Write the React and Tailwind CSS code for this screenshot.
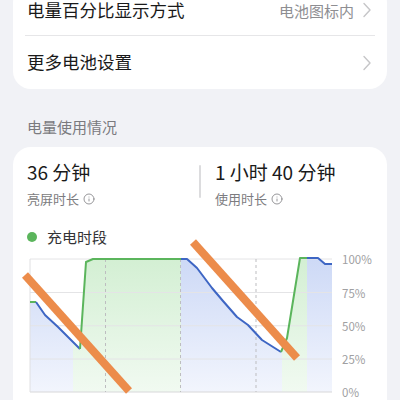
import React from 'react';
import { Info } from 'lucide-react';

const FONT = { fontFamily: '"Noto Sans CJK SC", "Noto Sans", sans-serif' };

/* chart geometry in page coordinates */
const TOP = 259;
const BOTTOM = 392;
const LEFT = 30;
const RIGHT = 332;

const blueA = [[36, 302], [45, 315], [58, 327], [68, 337], [80, 349]];
const greenA = [[80, 349], [86, 262], [93, 259], [181, 259]];
const blueB = [[181, 259], [187, 259], [197, 268], [212, 288], [223, 301], [237, 317], [248, 325], [262, 340], [281, 352]];
const greenB = [[281, 352], [287, 338], [300, 258], [307, 258]];
const blueC = [[307, 258], [318, 258], [325, 264], [332, 264]];

const curve = [[30, 302], ...blueA, ...greenA.slice(1), ...blueB.slice(1), ...greenB.slice(1), ...blueC.slice(1)];

const pts = arr => arr.map(p => p.join(',')).join(' ');

function Chevron(){
return (
<svg width="8" height="16" viewBox="0 0 8 16" className="shrink-0">
<polyline points="1,1.5 7,8 1,14.5" fill="none" stroke="#c6c6c8" strokeWidth="1.4" strokeLinecap="round" strokeLinejoin="round"/>
</svg>
);
}

function Chart(){

const area = `M30,${BOTTOM} L${pts(curve).replace(/ /g,' L')} L332,${BOTTOM} Z`;

return (
<svg width="373" height="152" viewBox="13 248 373 152" className="block overflow-visible">
<defs>
<linearGradient id="gBlue" x1="0" y1="0" x2="0" y2="1">
<stop offset="0" stopColor="#cdd9f6"/>
<stop offset="1" stopColor="#f2f5fd"/>
</linearGradient>
<linearGradient id="gGreen" x1="0" y1="0" x2="0" y2="1">
<stop offset="0" stopColor="#d3efd3"/>
<stop offset="1" stopColor="#f1faf1"/>
</linearGradient>
<clipPath id="cBlue">
<rect x="30" y="240" width="43" height="160"/>
<rect x="181" y="240" width="101" height="160"/>
<rect x="307" y="240" width="25" height="160"/>
</clipPath>
<clipPath id="cGreen">
<rect x="73" y="240" width="108" height="160"/>
<rect x="282" y="240" width="25" height="160"/>
</clipPath>
</defs>

{/* fills */}
<path d={area} fill="url(#gBlue)" clipPath="url(#cBlue)"/>
<path d={area} fill="url(#gGreen)" clipPath="url(#cGreen)"/>

{/* grid */}
{[259, 292.5, 325.75, 359].map(y=>(
<line key={y} x1={LEFT} x2={RIGHT} y1={y} y2={y} stroke="#e4e4e6" strokeWidth="1"/>
))}
<line x1={LEFT} x2={RIGHT} y1={BOTTOM} y2={BOTTOM} stroke="#d8d8da" strokeWidth="1.2"/>
<line x1={LEFT} x2={LEFT} y1={TOP} y2={BOTTOM} stroke="#e0e0e2" strokeWidth="1"/>
{[105.5, 180.5, 256].map(x=>(
<line key={x} x1={x} x2={x} y1={TOP} y2={BOTTOM} stroke="#bdbdc0" strokeWidth="1" strokeDasharray="3 3"/>
))}

{/* lines */}
<polyline points={pts([[30, 302], [36, 302]])} fill="none" stroke="#5bb55c" strokeWidth="2"/>
{[blueA, blueB, blueC].map((s,i)=>(
<polyline key={'b'+i} points={pts(s)} fill="none" stroke="#3e66c4" strokeWidth="2" strokeLinejoin="round"/>
))}
{[greenA, greenB].map((s,i)=>(
<polyline key={'g'+i} points={pts(s)} fill="none" stroke="#5bb55c" strokeWidth="2" strokeLinejoin="round"/>
))}

{/* y labels */}
{[['100%', 259], ['75%', 292.5], ['50%', 325.75], ['25%', 359], ['0%', 392]].map(([t,y])=>(
<text key={t} x="342" y={y} dominantBaseline="central" fontSize="11.5" fill="#a0a0a2" style={FONT}>{t}</text>
))}

{/* orange strokes */}
<line x1="25" y1="275" x2="129" y2="391" stroke="#ec8c4b" strokeWidth="8"/>
<line x1="193" y1="242" x2="297" y2="358" stroke="#ec8c4b" strokeWidth="8"/>
</svg>
);
}

export default function App(){

return(

<div className="w-[400px] h-[400px] overflow-hidden bg-[#f1f2f6]" style={FONT}>

{/* SETTINGS CARD */}

<div className="mx-[13px] -mt-[15px] bg-white rounded-[18px]">

<div className="h-[50px] flex items-center pl-[14px] pr-[16px]">
<div className="flex-1 text-[17.5px] leading-none text-[#1a1a1a]">电量百分比显示方式</div>
<div className="text-[15px] leading-none text-[#8e8e92] mr-[9px]">电池图标内</div>
<Chevron/>
</div>

<div className="mx-[12px] h-px bg-[#e6e6e8]"/>

<div className="h-[53px] flex items-center pl-[14px] pr-[16px]">
<div className="flex-1 text-[17.5px] text-[#1a1a1a]">更多电池设置</div>
<Chevron/>
</div>

</div>


{/* SECTION TITLE */}

<div className="px-[27px] pt-[27px] pb-[9px] text-[15px] leading-[22px] text-[#7a7a7e]">
电量使用情况
</div>


{/* USAGE CARD */}

<div className="mx-[13px] bg-white rounded-t-[18px] pt-[12px]">

<div className="grid grid-cols-[1fr_2px_1fr] px-[14px]">

<div className="whitespace-nowrap">
<div className="text-[19px] leading-[26px] font-normal text-[#1a1a1a]">36 分钟</div>
<div className="mt-[5px] flex items-center gap-[4px] text-[13px] leading-[18px] text-[#7c7c80]">
亮屏时长 <Info size={12} strokeWidth={1.6}/>
</div>
</div>

<div className="h-[33px] mt-[6px] bg-[#dcdcde] rounded"/>

<div className="whitespace-nowrap pl-[14px]">
<div className="text-[19px] leading-[26px] font-normal text-[#1a1a1a]">1 小时 40 分钟</div>
<div className="mt-[5px] flex items-center gap-[4px] text-[13px] leading-[18px] text-[#7c7c80]">
使用时长 <Info size={12} strokeWidth={1.6}/>
</div>
</div>

</div>

<div className="mt-[18px] px-[14px] flex items-center gap-[10px] h-[22px]">
<span className="w-[10px] h-[10px] rounded-full bg-[#5bb55c]"/>
<span className="text-[15px] text-[#333336]">充电时段</span>
</div>

<Chart/>

</div>

</div>

);

}
